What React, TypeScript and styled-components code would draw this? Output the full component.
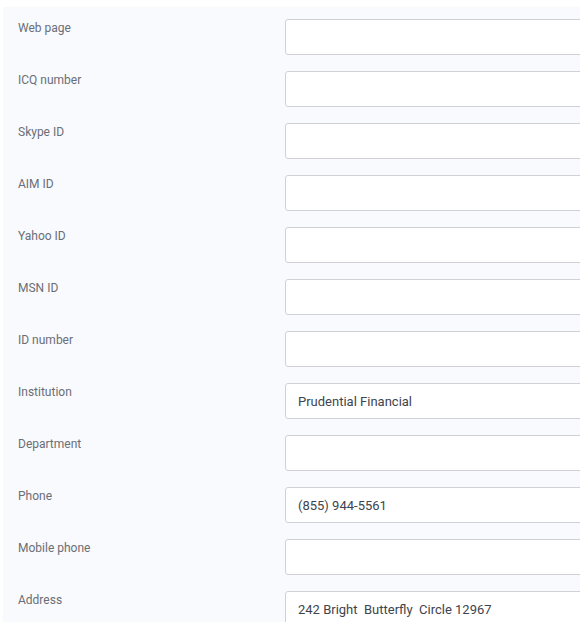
import React from "react";
import styled, { createGlobalStyle } from "styled-components";

const GlobalStyle = createGlobalStyle`
  html, body {
    margin: 0;
    padding: 0;
    background: #ffffff;
    overflow: hidden;
  }
  body {
    font-family: Roboto, "Liberation Sans", Arial, sans-serif;
  }
`;

const Page = styled.div`
  box-sizing: border-box;
  width: 580px;
  height: 622px;
  overflow: hidden;
  padding: 7px 0 0 3px;
`;

const Panel = styled.div`
  width: 660px;
  background: #f9fafd;
  padding: 12px 0 40px 15px;
  display: flex;
  flex-direction: column;
  gap: 16px;
`;

const Row = styled.div`
  display: grid;
  grid-template-columns: 267px 340px;
  align-items: start;
`;

const Label = styled.label`
  font-size: 12px;
  line-height: 16px;
  color: #6a6e76;
  padding-top: 1px;
`;

const Field = styled.input`
  box-sizing: border-box;
  height: 36px;
  width: 100%;
  border: 1px solid #cfd1d6;
  border-radius: 3px;
  background: #ffffff;
  padding: 0 12px;
  font-family: Roboto, "Liberation Sans", Arial, sans-serif;
  font-size: 13px;
  color: #40444c;
  outline: none;
`;

interface FieldRow {
  label: string;
  value?: string;
}

const rows: FieldRow[] = [
  { label: "Web page" },
  { label: "ICQ number" },
  { label: "Skype ID" },
  { label: "AIM ID" },
  { label: "Yahoo ID" },
  { label: "MSN ID" },
  { label: "ID number" },
  { label: "Institution", value: "Prudential Financial" },
  { label: "Department" },
  { label: "Phone", value: "(855) 944-5561" },
  { label: "Mobile phone" },
  { label: "Address", value: "242 Bright  Butterfly  Circle 12967" },
];

const App: React.FC = () => {
  return (
    <>
      <GlobalStyle />
      <Page>
        <Panel>
          {rows.map((row) => (
            <Row key={row.label}>
              <Label>{row.label}</Label>
              <Field type="text" defaultValue={row.value ?? ""} />
            </Row>
          ))}
        </Panel>
      </Page>
    </>
  );
};

export default App;
